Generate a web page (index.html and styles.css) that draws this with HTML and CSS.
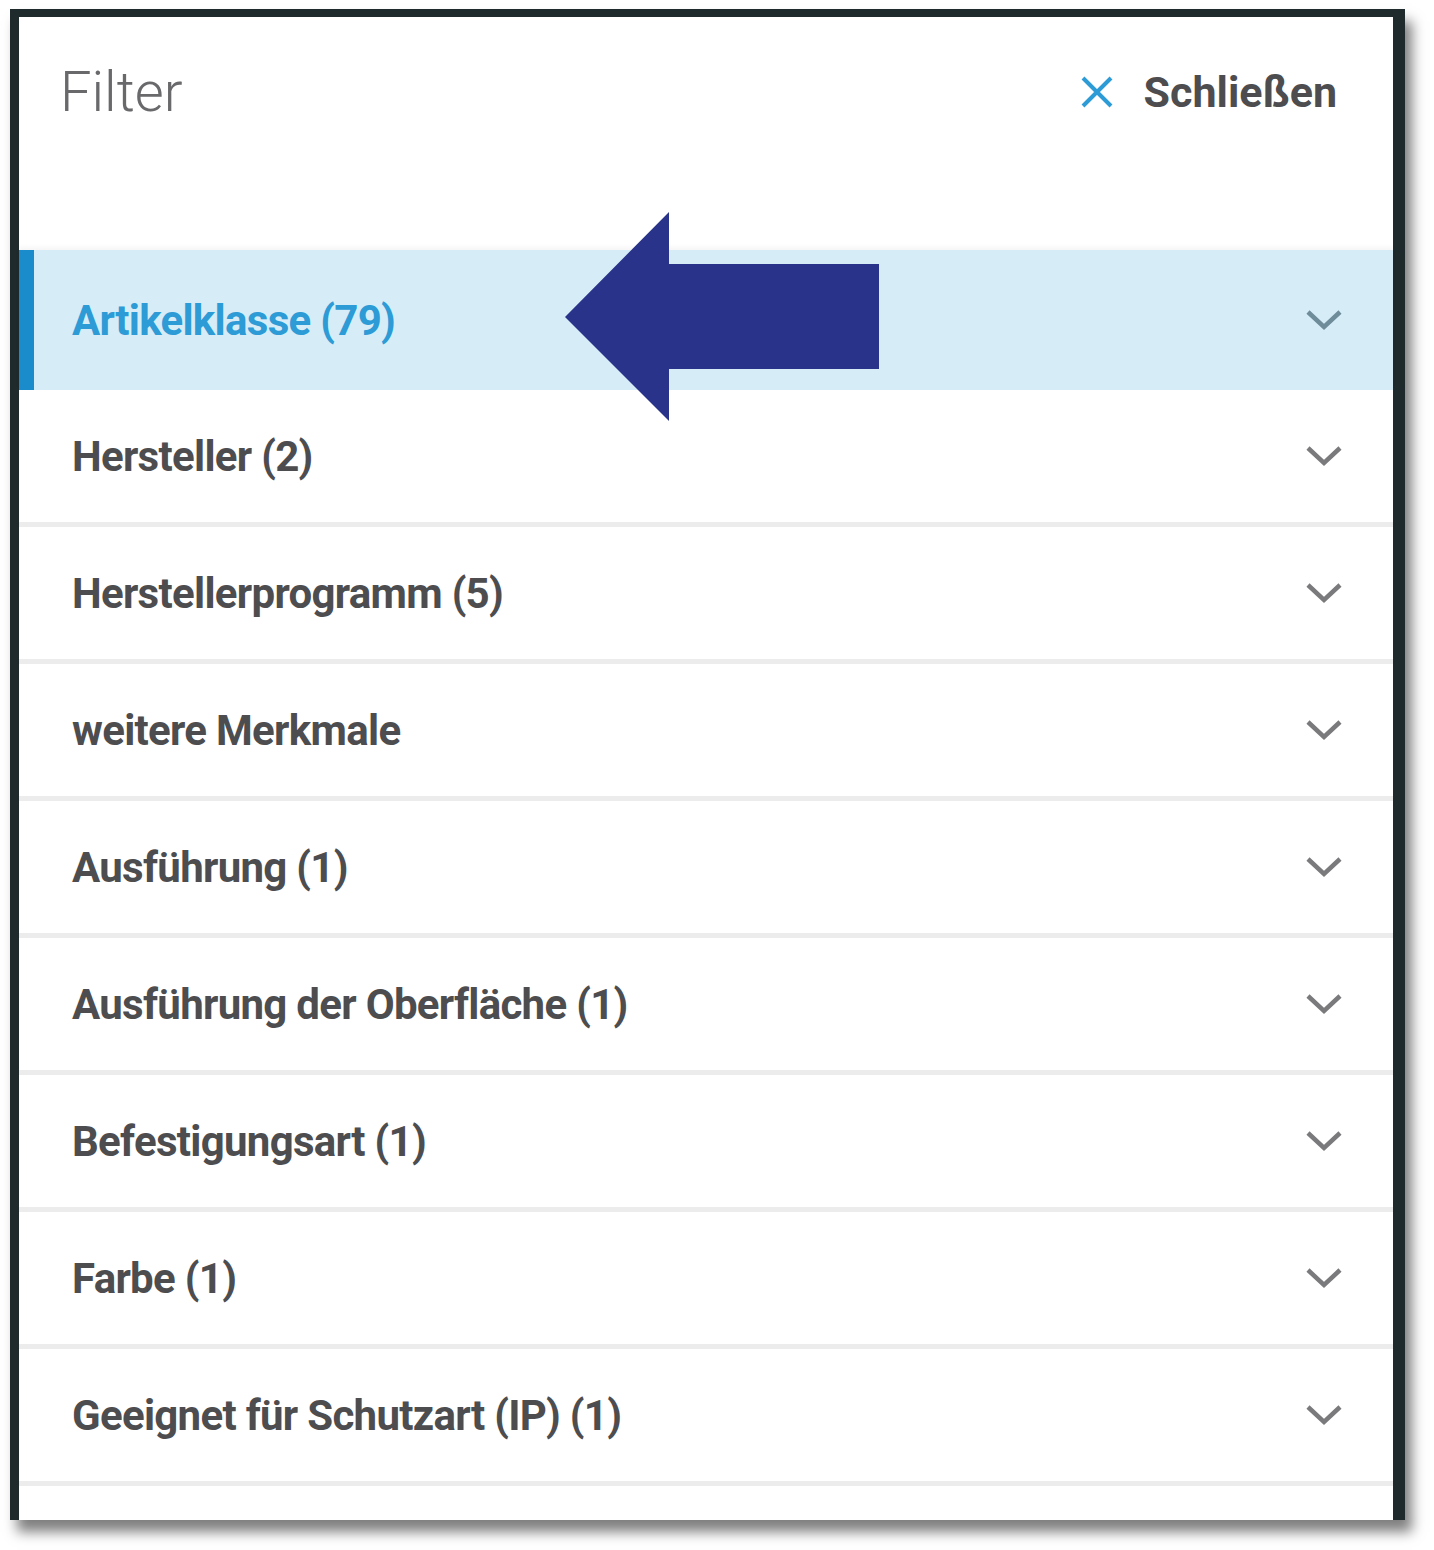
FILE: index.html
```html
<!DOCTYPE html>
<html lang="de">
<head>
    <meta charset="UTF-8">
    <meta name="viewport" content="width=device-width, initial-scale=1.0">
    <title>Filter</title>
    <link rel="stylesheet" href="styles.css">
</head>
<body>

    <div class="filter-panel">
        <div class="filter-header">
            <h2>Filter</h2>
            <button class="btn-close">
                <svg width="34" height="34" viewBox="0 0 34 34">
                    <path d="M3 3 L31 31 M31 3 L3 31" stroke="#2d9bd6" stroke-width="4" fill="none"/>
                </svg>
                Schließen
            </button>
        </div>

        <ul class="filter-list">
            <li class="filter-item active">Artikelklasse (79)</li>
            <li class="filter-item">Hersteller (2)</li>
            <li class="filter-item">Herstellerprogramm (5)</li>
            <li class="filter-item">weitere Merkmale</li>
            <li class="filter-item">Ausführung (1)</li>
            <li class="filter-item">Ausführung der Oberfläche (1)</li>
            <li class="filter-item">Befestigungsart (1)</li>
            <li class="filter-item">Farbe (1)</li>
            <li class="filter-item">Geeignet für Schutzart (IP) (1)</li>
        </ul>

        <!-- pointer to the selected filter -->
        <svg class="pointer" width="316" height="210" viewBox="0 0 316 210">
            <polygon points="0,105 104,0 104,52 314,52 314,157 104,157 104,209" fill="#283389"/>
        </svg>
    </div>

    <script>
        // add the chevron to every filter row
        document.querySelectorAll(".filter-item").forEach(function (item) {
            item.insertAdjacentHTML("beforeend",
                '<svg class="chevron" width="38" height="22" viewBox="0 0 38 22">' +
                '<path d="M3 3 L19 18 L35 3" stroke="currentColor" stroke-width="4.5" fill="none"/></svg>');
        });
    </script>

</body>
</html>
```

FILE: styles.css
```css
body {
    margin: 0;
    padding: 9px 0 30px 10px;
    background: #fff;
    font-family: Roboto, "Liberation Sans", sans-serif;
    color: #4d4d4f;
}
.filter-panel {
    position: relative;
    width: 1374px;
    height: 1503px;
    background: #fff;
    border-style: solid;
    border-color: #1e2a2c;
    border-width: 8px 12px 0 9px;
    box-shadow: 7px 12px 12px rgba(0, 0, 0, 0.5);
}
.filter-header {
    display: flex;
    justify-content: space-between;
    align-items: center;
    height: 150px;
    padding: 0 56px 0 41px;
    margin-bottom: 83px;
}
.filter-header h2 {
    margin: 0;
    font-size: 56px;
    font-weight: 300;
    color: #69696c;
}
.btn-close {
    display: flex;
    align-items: center;
    gap: 30px;
    background: none;
    border: none;
    padding: 0;
    font-family: inherit;
    font-size: 43px;
    font-weight: 700;
    color: #4d4d4f;
    cursor: pointer;
}
.filter-list {
    list-style: none;
    margin: 0;
    padding: 0;
}
.filter-item {
    display: flex;
    justify-content: space-between;
    align-items: center;
    height: 132px;
    padding: 0 50px 0 53px;
    border-bottom: 5px solid #ececec;
    font-size: 42px;
    font-weight: 700;
    letter-spacing: -0.7px;
}
.filter-item.active {
    height: 140px;
    padding-left: 38px;
    border-left: 15px solid #1b8ccb;
    border-bottom: none;
    background: #d6edf8;
    color: #2d9bd6;
    box-shadow: 0 -3px 4px rgba(0, 0, 0, 0.04);
}
.chevron {
    color: #7a7a7c;
}
.filter-item.active .chevron {
    color: #6f8c9a;
}
.pointer {
    position: absolute;
    left: 546px;
    top: 195px;
}
```
